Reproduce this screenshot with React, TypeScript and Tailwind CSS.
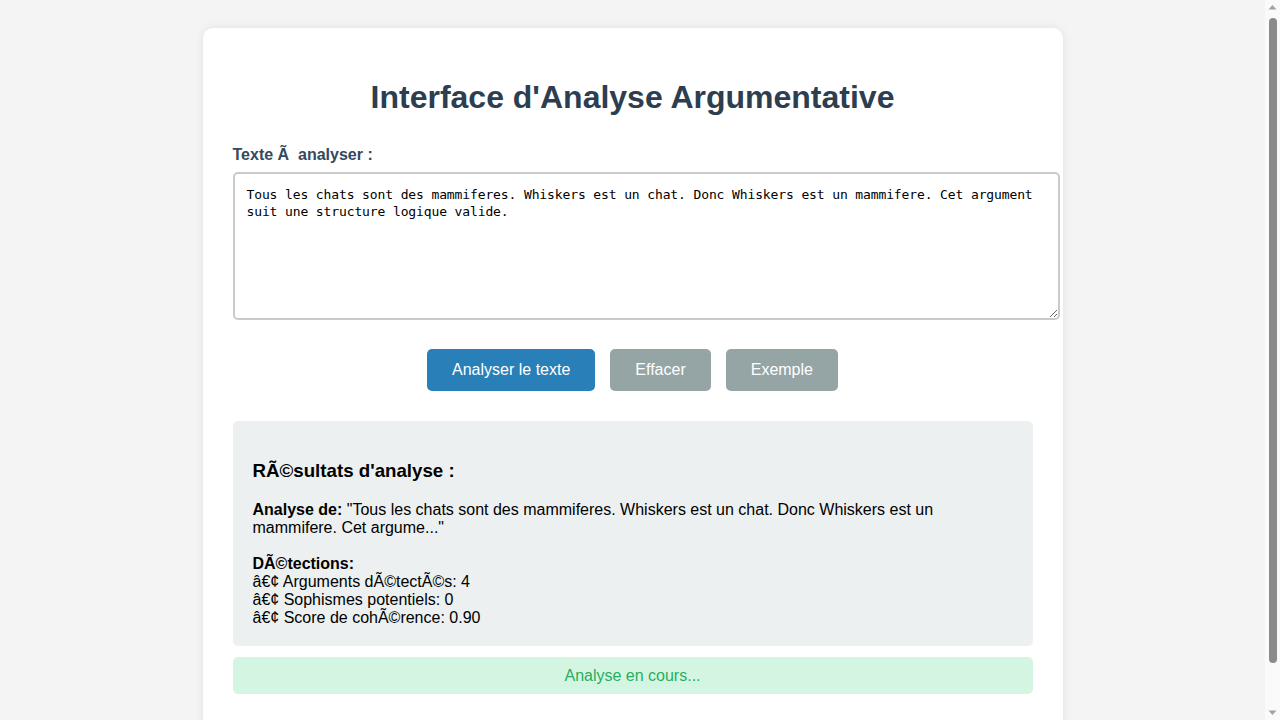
import { useState } from "react";

const SAMPLE =
  "Tous les chats sont des mammiferes. Whiskers est un chat. Donc Whiskers est un mammifere. Cet argument suit une structure logique valide.";

function FakeScrollbar() {
  return (
    <div className="flex w-[15px] shrink-0 flex-col items-center bg-[#fafafa]">
      <svg width="15" height="15" viewBox="0 0 15 15" className="shrink-0">
        <path d="M3.5 9.5 L7.5 5 L11.5 9.5 Z" fill="#a3a3a3" />
      </svg>
      <div className="mt-[3px] h-[645px] w-[8px] rounded-full bg-[#8b8b8b]" />
      <div className="flex-1" />
      <svg width="15" height="15" viewBox="0 0 15 15" className="shrink-0">
        <path d="M3.5 5.5 L7.5 10 L11.5 5.5 Z" fill="#a3a3a3" />
      </svg>
    </div>
  );
}

export default function App() {
  const [text, setText] = useState(SAMPLE);

  return (
    <div className="flex h-screen bg-[#f4f4f4] font-['Liberation_Sans',Arial,sans-serif]">
      <div className="flex-1 overflow-y-auto [scrollbar-width:none]">
        <div className="py-[28px]">
          <div className="mx-auto w-[860px] rounded-[10px] bg-white px-[30px] pt-[30px] pb-[38px] shadow-[0_0_10px_rgba(0,0,0,0.08)]">
            <h1 className="mt-[21px] mb-[30px] text-center text-[32px] leading-[37px] font-bold text-[#2c3e50]">
              Interface d'Analyse Argumentative
            </h1>

            <label className="mb-[8px] block text-[16px] leading-[18px] font-bold text-[#34495e]">
              Texte Ã&nbsp; analyser :
            </label>
            <textarea
              value={text}
              onChange={(e) => setText(e.target.value)}
              className="block h-[148px] w-[827px] resize-y rounded-[5px] border-2 border-[#c8cbce] bg-white p-[12px] font-['DejaVu_Sans_Mono',monospace] text-[13px] leading-[17px] tracking-[-0.12px] text-black outline-none"
            />

            <div className="mt-[29px] flex justify-center gap-[15px]">
              <button className="h-[42px] rounded-[5px] bg-[#2980b9] px-[25px] text-[16px] text-white">
                Analyser le texte
              </button>
              <button className="h-[42px] rounded-[5px] bg-[#95a5a6] px-[25px] text-[16px] text-white">
                Effacer
              </button>
              <button
                onClick={() => setText(SAMPLE)}
                className="h-[42px] rounded-[5px] bg-[#95a5a6] px-[25px] text-[16px] text-white"
              >
                Exemple
              </button>
            </div>

            <div className="mt-[30px] rounded-[5px] bg-[#ecf0f1] px-[20px] pt-[20px] pb-[19px] text-[16px] leading-[18px] text-black">
              <h3 className="mt-[19px] mb-[20px] text-[18.72px] leading-[21px] font-bold">RÃ©sultats d'analyse :</h3>
              <div>
                <strong>Analyse de:</strong> "Tous les chats sont des mammiferes. Whiskers est un chat. Donc Whiskers est
                un mammifere. Cet argume..."
                <br />
                <br />
                <strong>DÃ©tections:</strong>
                <br />
                â€¢ Arguments dÃ©tectÃ©s: 4
                <br />
                â€¢ Sophismes potentiels: 0
                <br />
                â€¢ Score de cohÃ©rence: 0.90
              </div>
            </div>

            <div className="mt-[11px] rounded-[5px] bg-[#d5f5e3] py-[10px] text-center text-[16px] leading-[17px] text-[#27ae60]">
              Analyse en cours...
            </div>
          </div>
        </div>
      </div>
      <FakeScrollbar />
    </div>
  );
}
